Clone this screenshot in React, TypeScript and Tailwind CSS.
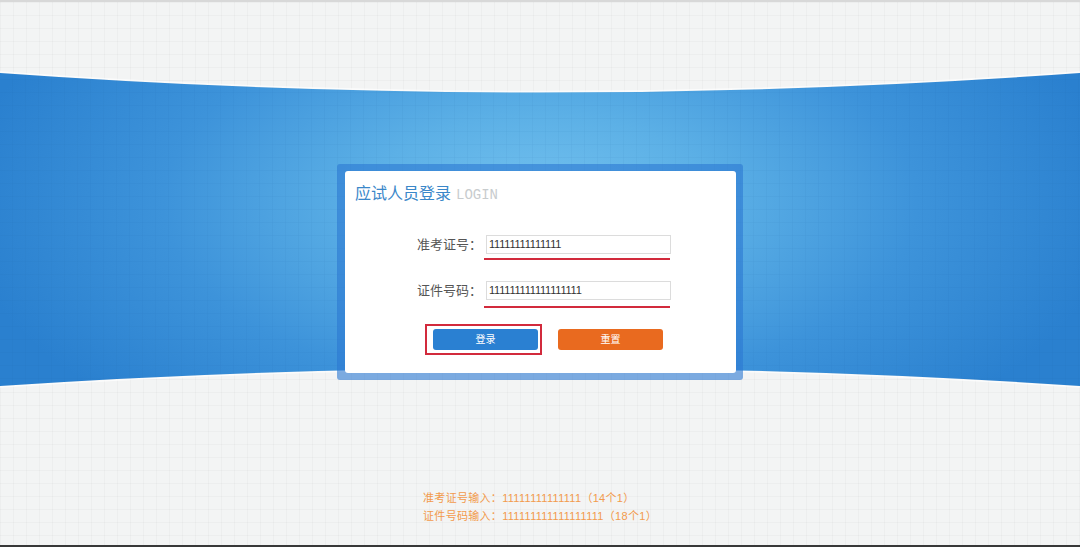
const cjk = "font-['Liberation_Sans','Noto_Sans_CJK_SC',sans-serif]";

const Band = () => (
  <svg
    className="absolute inset-0 h-full w-full"
    viewBox="0 0 1080 543"
    preserveAspectRatio="none"
  >
    <defs>
      <radialGradient
        id="bandFill"
        gradientUnits="userSpaceOnUse"
        cx="540"
        cy="200"
        r="580"
        gradientTransform="translate(540 200) scale(1 0.5) translate(-540 -200)"
      >
        <stop offset="0" stopColor="#74c2ef" />
        <stop offset="0.3" stopColor="#5cb0e6" />
        <stop offset="0.65" stopColor="#3d93da" />
        <stop offset="1" stopColor="#2a80cf" />
      </radialGradient>
      <pattern id="bandGrid" width="13" height="13" patternUnits="userSpaceOnUse">
        <path d="M13 0V13M0 13H13" stroke="#0b4f96" strokeOpacity="0.09" strokeWidth="1" fill="none" />
      </pattern>
      <clipPath id="bandClip">
        <path d="M0 71Q540 110 1080 71L1080 384Q540 348 0 384Z" />
      </clipPath>
    </defs>
    <path d="M0 70Q540 109 1080 70" stroke="#ffffff" strokeOpacity="0.7" strokeWidth="1.5" fill="none" />
    <path d="M0 385Q540 349 1080 385" stroke="#ffffff" strokeOpacity="0.7" strokeWidth="1.5" fill="none" />
    <g clipPath="url(#bandClip)">
      <rect width="1080" height="543" fill="url(#bandFill)" />
      <rect width="1080" height="543" fill="url(#bandGrid)" />
    </g>
  </svg>
);

const Field = ({ label, value, gap }: { label: string; value: string; gap: string }) => (
  <div className="flex">
    <div className="w-[139px] pr-[2px] text-right text-[13px] leading-[19px] text-[#555]">{label}</div>
    <div className="flex flex-col">
      <div className="ml-[2px] flex h-[19px] w-[185px] items-center border border-[#dcdcdc] bg-white pl-[2px] text-[11px] tracking-[-0.2px] text-[#333]">
        {value}
      </div>
      <div className={`${gap} h-[2px] w-[186px] bg-[#d22a3c]`} />
    </div>
  </div>
);

export default function App() {
  return (
    <div
      className={`relative h-[547px] w-full overflow-hidden border-t-2 border-b-2 border-t-[#d8d8d8] border-b-[#383838] bg-[#f3f4f4] bg-[linear-gradient(to_right,rgba(0,0,0,0.025)_1px,transparent_1px),linear-gradient(to_bottom,rgba(0,0,0,0.025)_1px,transparent_1px)] bg-[size:13px_13px] ${cjk}`}
    >
      <Band />
      <div className="relative flex flex-col items-center pt-[162px]">
        <div className="w-[406px] rounded-[3px] bg-[#2b78d2]/60 p-[7px] pl-[8px]">
          <div className="h-[202px] rounded-[3px] bg-white">
            <div className="flex items-baseline pl-[10px] pt-[13px] leading-[20px]">
              <span className="text-[16px] text-[#3a87c9]">应试人员登录</span>
              <span className="ml-[5px] font-['Liberation_Mono',monospace] text-[14px] text-[#c8ccce]">LOGIN</span>
            </div>
            <div className="mt-[30px]">
              <Field label="准考证号：" value="11111111111111" gap="mt-[4px]" />
            </div>
            <div className="mt-[21px]">
              <Field label="证件号码：" value="111111111111111111" gap="mt-[6px]" />
            </div>
            <div className="mt-[16px] flex items-center pl-[80px]">
              <div className="border-2 border-[#d22a3c] py-[3px] pl-[6px] pr-[2px]">
                <button className="flex h-[21px] w-[105px] items-center justify-center rounded-[3px] bg-[#2a80d2] text-[10px] text-white">
                  登录
                </button>
              </div>
              <button className="ml-[16px] flex h-[21px] w-[105px] items-center justify-center rounded-[3px] bg-[#e96a1f] text-[10px] text-white">
                重置
              </button>
            </div>
          </div>
        </div>
        <div className="mt-[109px] flex flex-col text-[11px] leading-[18px] tracking-[0.3px] text-[#f29a4c]">
          <div>准考证号输入：11111111111111（14个1）</div>
          <div>证件号码输入：111111111111111111（18个1）</div>
        </div>
      </div>
    </div>
  );
}
